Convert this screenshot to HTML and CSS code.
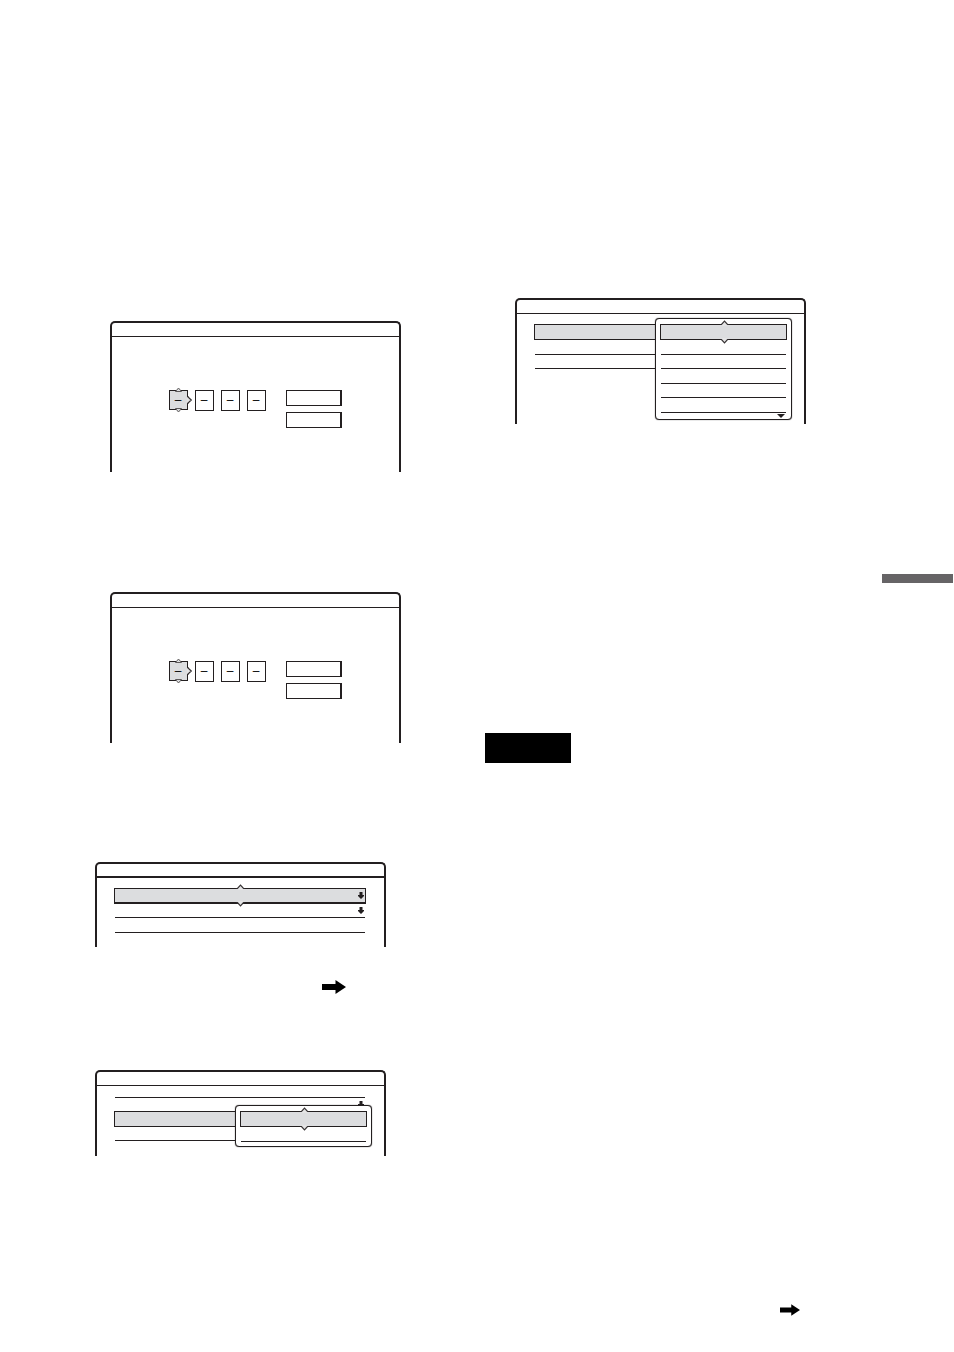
FILE: index.html
```html
<!DOCTYPE html>
<html lang="en">
<head>
<meta charset="UTF-8">
<meta name="viewport" content="width=device-width, initial-scale=1.0">
<title>Setup screens</title>
<link rel="stylesheet" href="styles.css">
</head>
<body>

<!-- shared icons -->
<svg class="sprite" aria-hidden="true">
    <symbol id="caret" viewBox="0 0 9 6">
        <path d="M1.500 6V4.500L4.500 1.500L7.500 4.500V6z" fill="#e4e4e5"/>
        <path d="M0.500 4.500H1.500L4.500 1.200L7.500 4.500H8.500" fill="none" stroke="#353132" stroke-width="1.200"/>
    </symbol>
    <symbol id="caret-closed" viewBox="0 0 9 6">
        <path d="M2 3h5v1H2z" fill="#dcdddf"/>
        <path d="M1.500 4.500L4.500 1L7.500 4.500z" fill="#dcdddf" stroke="#5c595a"/>
    </symbol>
    <symbol id="down" viewBox="0 0 6 7">
        <path d="M1.500 0h3v3H6v1L3 7L0 4V3h1.500z" fill="#231f20"/>
    </symbol>
    <symbol id="next" viewBox="0 0 24 14">
        <path d="M0 4h13.500V0L24 7L13.500 14V10H0z" fill="#000"/>
    </symbol>
</svg>

<main class="page">
    <section class="column left">
        <div class="screen form-screen first">
            <div class="title"></div>
            <form class="entry">
                <div class="digits">
                    <span class="digit active">
                        <input type="text" value="–" aria-label="Digit 1">
                        <svg class="caret up"><use href="#caret-closed"/></svg>
                        <svg class="caret side"><use href="#caret"/></svg>
                        <svg class="caret low"><use href="#caret-closed"/></svg>
                    </span>
                    <span class="digit"><input type="text" value="–" aria-label="Digit 2"></span>
                    <span class="digit"><input type="text" value="–" aria-label="Digit 3"></span>
                    <span class="digit"><input type="text" value="–" aria-label="Digit 4"></span>
                </div>
                <div class="actions">
                    <button type="button" aria-label="OK"></button>
                    <button type="button" aria-label="Cancel"></button>
                </div>
            </form>
        </div>

        <div class="screen form-screen second">
            <div class="title"></div>
            <form class="entry">
                <div class="digits">
                    <span class="digit active">
                        <input type="text" value="–" aria-label="Digit 1">
                        <svg class="caret up"><use href="#caret-closed"/></svg>
                        <svg class="caret side"><use href="#caret"/></svg>
                        <svg class="caret low"><use href="#caret-closed"/></svg>
                    </span>
                    <span class="digit"><input type="text" value="–" aria-label="Digit 2"></span>
                    <span class="digit"><input type="text" value="–" aria-label="Digit 3"></span>
                    <span class="digit"><input type="text" value="–" aria-label="Digit 4"></span>
                </div>
                <div class="actions">
                    <button type="button" aria-label="OK"></button>
                    <button type="button" aria-label="Cancel"></button>
                </div>
            </form>
        </div>

        <div class="screen list-screen third">
            <div class="title thick"></div>
            <ul class="list">
                <li class="row selected heavy">
                    <svg class="caret up"><use href="#caret"/></svg>
                    <svg class="caret low"><use href="#caret"/></svg>
                    <svg class="down"><use href="#down"/></svg>
                </li>
                <li class="row short"><svg class="down"><use href="#down"/></svg></li>
                <li class="row"></li>
            </ul>
        </div>

        <svg class="next"><use href="#next"/></svg>

        <div class="screen list-screen fourth">
            <div class="title"></div>
            <ul class="list scrolled">
                <li class="row partial"></li>
                <li class="row open"><svg class="down"><use href="#down"/></svg></li>
                <li class="row selected"></li>
                <li class="row short"></li>
            </ul>
            <ul class="popup lower">
                <li class="row selected">
                    <svg class="caret up"><use href="#caret"/></svg>
                    <svg class="caret low"><use href="#caret"/></svg>
                </li>
                <li class="row"></li>
            </ul>
        </div>
    </section>

    <section class="column right">
        <div class="screen list-screen fifth">
            <div class="title"></div>
            <ul class="list">
                <li class="row selected"></li>
                <li class="row"></li>
                <li class="row short"></li>
            </ul>
            <ul class="popup upper">
                <li class="row selected">
                    <svg class="caret up"><use href="#caret"/></svg>
                    <svg class="caret low"><use href="#caret"/></svg>
                </li>
                <li class="row"></li>
                <li class="row short"></li>
                <li class="row"></li>
                <li class="row short"></li>
                <li class="row"></li>
                <li class="more"><svg width="8" height="4" viewBox="0 0 8 4"><path d="M0 0h8L4 4z" fill="#231f20"/></svg></li>
            </ul>
        </div>

        <div class="block"></div>
        <svg class="next small"><use href="#next"/></svg>
    </section>

    <aside class="tab"></aside>
</main>

</body>
</html>
```

FILE: styles.css
```css
body {
    margin: 0;
    background-color: #ffffff;
    font-family: "Liberation Sans", Arial, sans-serif;
    font-size: 12px;
    color: #231f20;
}

ul {
    margin: 0;
    padding: 0;
    list-style: none;
}

svg {
    display: block;
}

.sprite {
    position: absolute;
    width: 0;
    height: 0;
}

.page {
    display: grid;
    grid-template-columns: 390fr 397fr 71px;
    padding-right: 1px;
    padding-left: 95px;
}

/* screens */
.screen {
    position: relative;
    box-sizing: border-box;
    width: 100%;
    max-width: 291px;
    border: 2px solid #231f20;
    border-bottom: none;
    border-radius: 5px 5px 0 0;
}

.title {
    height: 13px;
    border-bottom: 1px solid #231f20;
}

.title.thick {
    height: 12px;
    border-bottom-width: 2px;
}

.form-screen {
    min-height: 151px;
    margin-left: 15px;
}

.list-screen {
    min-height: 85px;
}

.first {
    margin-top: 321px;
}

.second {
    margin-top: 120px;
}

.third {
    margin-top: 119px;
}

.fourth {
    margin-top: 76px;
    min-height: 86px;
}

.fifth {
    margin-top: 298px;
    margin-left: 30px;
    min-height: 126px;
}

/* number entry */
.entry {
    display: flex;
    gap: 20px;
    padding: 53px 57px 0;
}

.digits {
    display: flex;
    gap: 7px;
}

.digit {
    position: relative;
    width: 19px;
    height: 21px;
}

.digit input {
    display: block;
    box-sizing: border-box;
    width: 100%;
    height: 100%;
    padding: 0 1px 2px 0;
    border: 1px solid #231f20;
    border-radius: 0;
    background-color: #ffffff;
    font: inherit;
    color: #000000;
    text-align: center;
}

.digit.active {
    height: 20px;
}

.digit.active input {
    padding-bottom: 1px;
    background-color: #dcdddf;
}

.actions {
    display: flex;
    flex-direction: column;
    gap: 6px;
}

.actions button {
    width: 56px;
    height: 16px;
    padding: 0;
    border: 1px solid #231f20;
    border-right-width: 2px;
    border-radius: 0;
    background-color: #ffffff;
}

/* lists */
.list {
    padding: 10px 19px 0 18px;
}

.list.scrolled {
    padding-top: 0;
}

.row {
    position: relative;
    display: flex;
    align-items: center;
    justify-content: flex-end;
    box-sizing: border-box;
    height: 15px;
    padding-right: 1px;
    border-bottom: 1px solid #231f20;
}

.row.short {
    height: 14px;
}

.row.partial {
    height: 12px;
}

.row.open {
    height: 13px;
    border-bottom: none;
}

.row.selected {
    height: 16px;
    margin: 0 -1px;
    border: 1px solid #231f20;
    background-color: #dcdddf;
}

.row.heavy {
    border-bottom-width: 2px;
}

.down {
    width: 6px;
    height: 7px;
}

.popup {
    position: absolute;
    left: 138px;
    box-sizing: border-box;
    width: 137px;
    padding: 5px 5px 4px;
    border: 1px solid #231f20;
    border-radius: 4px;
    background-color: #ffffff;
    box-shadow: 0 0 1px #231f20;
}

.popup.lower {
    top: 33px;
}

.popup.upper {
    top: 18px;
    padding-bottom: 1px;
}

.more {
    display: flex;
    justify-content: flex-end;
    padding: 1px 1px 0 0;
}

/* direction marks over the selected item */
.caret {
    position: absolute;
    left: 50%;
    width: 9px;
    height: 6px;
    margin-left: -4px;
}

.caret.up {
    top: -5px;
}

.caret.low {
    bottom: -5px;
    transform: rotate(180deg);
}

.digit .caret {
    margin-left: -5px;
}

.digit .caret.up {
    top: -3px;
}

.digit .caret.low {
    bottom: -3px;
}

.digit .caret.side {
    top: 7px;
    left: 21px;
    transform: rotate(90deg);
}

/* arrows and marks */
.next {
    width: 24px;
    height: 14px;
    margin-top: 33px;
    margin-left: 227px;
}

.next.small {
    width: 20px;
    height: 12px;
    margin-top: 541px;
    margin-left: 295px;
}

.block {
    width: 86px;
    height: 30px;
    margin-top: 309px;
    background-color: #000000;
}

.tab {
    height: 9px;
    margin-top: 574px;
    background-color: #666466;
}
```
